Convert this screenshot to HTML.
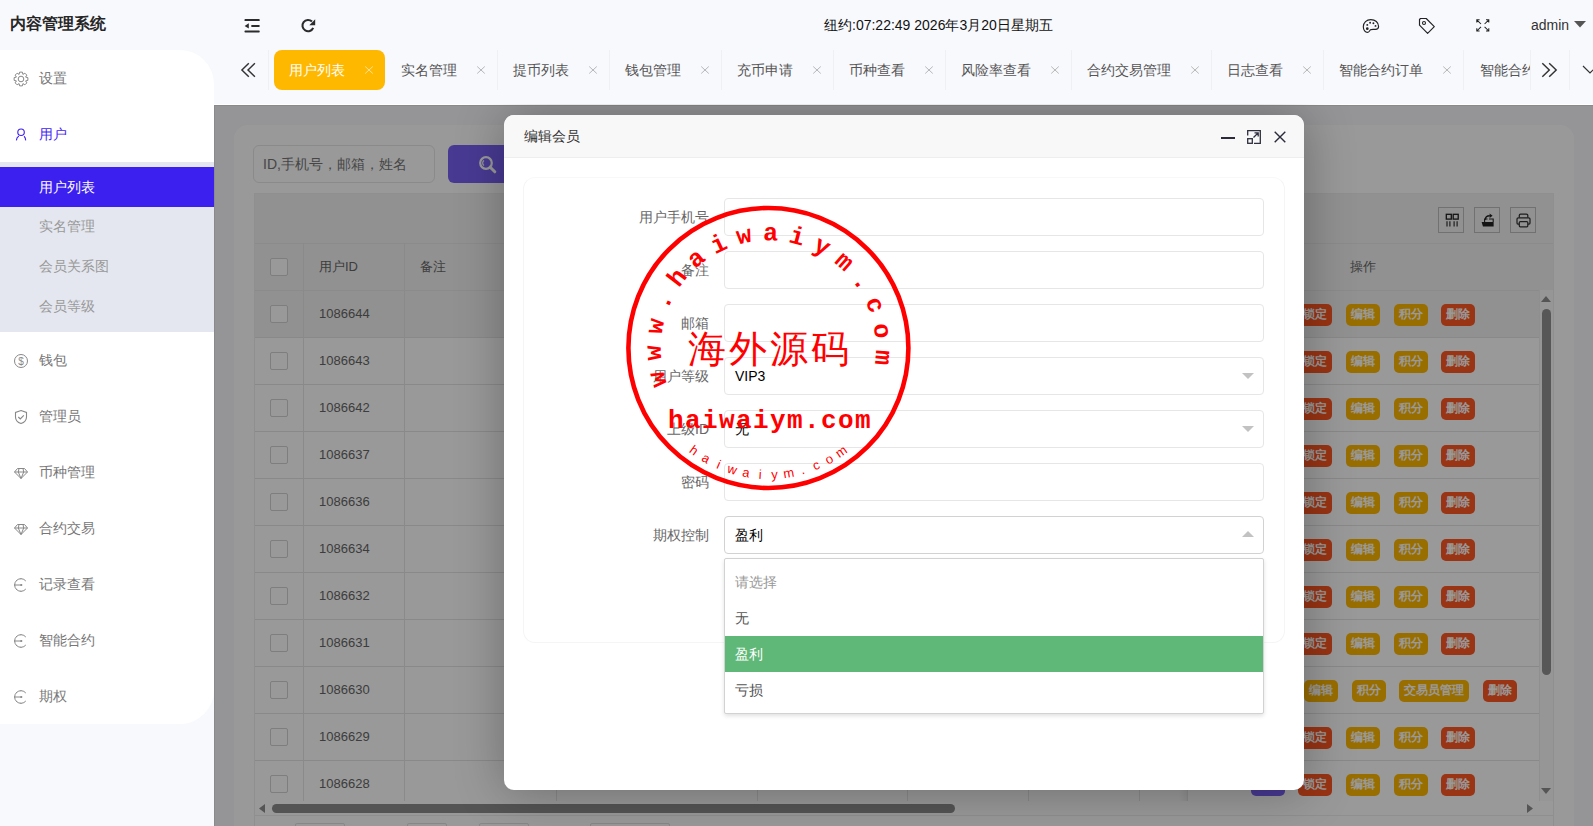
<!DOCTYPE html><html><head><meta charset="utf-8"><style>
*{box-sizing:border-box}
html,body{margin:0;padding:0}
body{width:1593px;height:826px;overflow:hidden;position:relative;background:#f8f9fd;font-family:"Liberation Sans",sans-serif;font-size:14px;color:#333}
.a{position:absolute}
.nw{white-space:nowrap}
svg{display:block}
#logo{left:10px;top:12.5px;font-size:15.6px;font-weight:bold;color:#262626;line-height:22px}
#date{left:824px;top:16px;line-height:18px;color:#111}
#admin{left:1531px;top:16px;line-height:18px;color:#333}
.tab{position:absolute;top:50px;height:40px;line-height:40px;color:#555;white-space:nowrap}
.tab .t{position:absolute;left:16px;top:0}
.tab.on .t{left:15px}
.tab .x{position:absolute;top:15px}
.tab.on{background:#ffb800;border-radius:8px;color:#fff}
.sep{position:absolute;top:50px;width:1px;height:40px;background:#eff0f4}
#side{left:0;top:50px;width:214px;height:674px;background:#fff;border-radius:0 34px 34px 0;overflow:hidden}
.mi{position:absolute;left:39px;line-height:20px;color:#777;white-space:nowrap}
.ic{position:absolute;left:13px}
#sub{left:0;top:112px;width:214px;height:170px;background:#e4e7ef}
#act{left:0;top:117px;width:214px;height:40px;background:#3c20f0}
#wrap{left:214px;top:104px;width:1379px;height:722px;overflow:hidden;background:#fff}
#content{left:0;top:1px;width:1379px;height:721px;background:#f8f9fd;border-top:1px solid #e8e9ee;border-left:1px solid #e8e9ee}
#shade{left:0;top:1px;width:1379px;height:721px;background:rgba(0,0,0,.4)}
#card{left:20px;top:20px;width:1339px;height:760px;background:#fff;border-radius:14px}
#search{left:39px;top:41px;width:182px;height:38px;border:1px solid #e6e6e6;border-radius:6px;color:#777;line-height:36px;padding-left:9px}
#sbtn{left:234px;top:41px;width:120px;height:38px;background:#7862f5;border-radius:6px}
#tbl{left:40px;top:89px;width:1300px;height:630px;border:1px solid #eee;background:#fff;overflow:hidden}
.row{position:absolute;left:0;width:1298px;height:47px;border-bottom:1px solid #eee}
.cell{position:absolute;top:0;height:46px;line-height:46px;color:#666;white-space:nowrap;font-size:13px}
.vl{position:absolute;width:1px;background:#e6e6e6}
.cb{position:absolute;width:18px;height:18px;border:1px solid #d2d2d2;border-radius:2px;background:#fff}
.btn{position:absolute;height:22px;line-height:21px;font-size:12px;font-weight:bold;color:#fff;border-radius:5px;text-align:center;white-space:nowrap}
.red{background:#ff5722}.yel{background:#ffb800}.pur{background:#7862f5}
#modal{left:290px;top:11px;width:800px;height:675px;background:#fff;border-radius:10px;box-shadow:1px 1px 50px rgba(0,0,0,.3);overflow:hidden}
#mtitle{left:0;top:0;width:800px;height:43px;background:#f8f8f8;border-bottom:1px solid #eee}
#mtt{left:20px;top:0;line-height:42px;color:#333}
#icard{left:19px;top:62px;width:762px;height:466px;border:1px solid #f5f5f5;border-top-color:#f8f8f8;border-radius:12px}
.lab{position:absolute;width:120px;text-align:right;color:#666;line-height:20px;white-space:nowrap}
.inp{position:absolute;left:220px;width:540px;height:38px;border:1px solid #e6e6e6;border-radius:4px;background:#fff;line-height:36px;padding-left:10px;color:#000}
#dd{left:220px;top:443px;width:540px;height:156px;border:1px solid #d2d2d2;background:#fff;box-shadow:0 2px 4px rgba(0,0,0,.12);border-radius:2px}
.ddi{position:absolute;left:0;width:538px;height:36px;line-height:36px;padding-left:10px;color:#555}
</style></head><body>
<div id="logo" class="a nw">内容管理系统</div>
<svg class="a" style="left:244px;top:18px" width="17" height="16" viewBox="0 0 17 16"><rect x="0.5" y="1.1" width="15.2" height="2" rx="0.7" fill="#2b2b2b"/><rect x="7.2" y="6.9" width="8.5" height="2" rx="0.7" fill="#2b2b2b"/><rect x="0.5" y="12.5" width="15.2" height="2" rx="0.7" fill="#2b2b2b"/><path d="M0.6 7.9 L4.8 5.3 L4.8 10.5 Z" fill="#2b2b2b"/></svg>
<svg class="a" style="left:300px;top:18px" width="17" height="16" viewBox="0 0 17 16"><path d="M13.2 9.8 A5.6 5.6 0 1 1 12 3.6" fill="none" stroke="#2b2b2b" stroke-width="2.1"/><path d="M15.2 1.3 L15.2 7.2 L9.3 7.2 Z" fill="#2b2b2b"/></svg>
<div id="date" class="a nw">纽约:07:22:49 2026年3月20日星期五</div>
<svg class="a" style="left:1362px;top:18px" width="18" height="16" viewBox="0 0 18 16"><path d="M8.8 1.6 C4.6 1.6 1.3 4.6 1.3 8.8 C1.3 12.2 3.4 14.4 5.4 14.4 C7.2 14.4 7.4 12.6 8.6 11.8 C9.8 11 11.4 11.4 13.4 11.4 C15.6 11.4 16.6 10.8 16.6 8.6 C16.6 4.4 13.2 1.6 8.8 1.6 Z" fill="none" stroke="#222" stroke-width="1.15"/><circle cx="5.3" cy="6.9" r="0.95" fill="#222"/><circle cx="8.1" cy="4.8" r="0.95" fill="#222"/><circle cx="11.4" cy="5.3" r="0.95" fill="#222"/><circle cx="13.5" cy="7.9" r="0.95" fill="#222"/><circle cx="5.3" cy="10.7" r="1.35" fill="#222"/></svg>
<svg class="a" style="left:1418px;top:17px" width="18" height="18" viewBox="0 0 18 18"><path d="M1.5 2.5 L1.5 8.2 L9.6 16.3 L16.3 9.6 L8.2 1.5 L2.5 1.5 Z" fill="none" stroke="#222" stroke-width="1.15" stroke-linejoin="round"/><circle cx="6" cy="6" r="1.5" fill="none" stroke="#222" stroke-width="1.1"/></svg>
<svg class="a" style="left:1476px;top:19px" width="14" height="14" viewBox="0 0 14 14" fill="none" stroke="#222" stroke-width="1.05"><path d="M0.8 3.6 V0.8 H3.6 M0.8 0.8 L5 5"/><path d="M10 0.8 H12.8 V3.6 M12.8 0.8 L8.6 5"/><path d="M0.8 9.2 V12 H3.6 M0.8 12 L5 7.8"/><path d="M12.8 9.2 V12 H10 M12.8 12 L8.6 7.8"/></svg>
<div id="admin" class="a nw">admin</div>
<svg class="a" style="left:1574px;top:21px" width="12" height="7" viewBox="0 0 12 7"><path d="M0 0 L12 0 L6 6.5 Z" fill="#555"/></svg>
<svg class="a" style="left:240px;top:62px" width="17" height="16" viewBox="0 0 17 16"><path d="M8.8 1.2 L1.9 7.9 L8.8 14.8 M14.9 1.2 L8 7.9 L14.9 14.8" fill="none" stroke="#333" stroke-width="1.45"/></svg>
<div class="sep" style="left:268px"></div>
<div class="tab on" style="left:274px;width:111px"><span class="t">用户列表</span><span class="x" style="left:90px"><svg width="10" height="10" viewBox="0 0 10 10"><path d="M1.2 1.5 L8.8 8.5 M8.8 1.5 L1.2 8.5" stroke="#fff" stroke-width="1" opacity="0.6"/></svg></span></div>
<div class="tab" style="left:385px;width:112px"><span class="t">实名管理</span><span class="x" style="left:91px"><svg width="10" height="10" viewBox="0 0 10 10"><path d="M1.2 1.5 L8.8 8.5 M8.8 1.5 L1.2 8.5" stroke="#b8b8b8" stroke-width="1" opacity="1"/></svg></span></div>
<div class="sep" style="left:497px"></div>
<div class="tab" style="left:497px;width:112px"><span class="t">提币列表</span><span class="x" style="left:91px"><svg width="10" height="10" viewBox="0 0 10 10"><path d="M1.2 1.5 L8.8 8.5 M8.8 1.5 L1.2 8.5" stroke="#b8b8b8" stroke-width="1" opacity="1"/></svg></span></div>
<div class="sep" style="left:609px"></div>
<div class="tab" style="left:609px;width:112px"><span class="t">钱包管理</span><span class="x" style="left:91px"><svg width="10" height="10" viewBox="0 0 10 10"><path d="M1.2 1.5 L8.8 8.5 M8.8 1.5 L1.2 8.5" stroke="#b8b8b8" stroke-width="1" opacity="1"/></svg></span></div>
<div class="sep" style="left:721px"></div>
<div class="tab" style="left:721px;width:112px"><span class="t">充币申请</span><span class="x" style="left:91px"><svg width="10" height="10" viewBox="0 0 10 10"><path d="M1.2 1.5 L8.8 8.5 M8.8 1.5 L1.2 8.5" stroke="#b8b8b8" stroke-width="1" opacity="1"/></svg></span></div>
<div class="sep" style="left:833px"></div>
<div class="tab" style="left:833px;width:112px"><span class="t">币种查看</span><span class="x" style="left:91px"><svg width="10" height="10" viewBox="0 0 10 10"><path d="M1.2 1.5 L8.8 8.5 M8.8 1.5 L1.2 8.5" stroke="#b8b8b8" stroke-width="1" opacity="1"/></svg></span></div>
<div class="sep" style="left:945px"></div>
<div class="tab" style="left:945px;width:126px"><span class="t">风险率查看</span><span class="x" style="left:105px"><svg width="10" height="10" viewBox="0 0 10 10"><path d="M1.2 1.5 L8.8 8.5 M8.8 1.5 L1.2 8.5" stroke="#b8b8b8" stroke-width="1" opacity="1"/></svg></span></div>
<div class="sep" style="left:1071px"></div>
<div class="tab" style="left:1071px;width:140px"><span class="t">合约交易管理</span><span class="x" style="left:119px"><svg width="10" height="10" viewBox="0 0 10 10"><path d="M1.2 1.5 L8.8 8.5 M8.8 1.5 L1.2 8.5" stroke="#b8b8b8" stroke-width="1" opacity="1"/></svg></span></div>
<div class="sep" style="left:1211px"></div>
<div class="tab" style="left:1211px;width:112px"><span class="t">日志查看</span><span class="x" style="left:91px"><svg width="10" height="10" viewBox="0 0 10 10"><path d="M1.2 1.5 L8.8 8.5 M8.8 1.5 L1.2 8.5" stroke="#b8b8b8" stroke-width="1" opacity="1"/></svg></span></div>
<div class="sep" style="left:1323px"></div>
<div class="tab" style="left:1323px;width:140px"><span class="t">智能合约订单</span><span class="x" style="left:119px"><svg width="10" height="10" viewBox="0 0 10 10"><path d="M1.2 1.5 L8.8 8.5 M8.8 1.5 L1.2 8.5" stroke="#b8b8b8" stroke-width="1" opacity="1"/></svg></span></div>
<div class="sep" style="left:1463px"></div>
<div class="tab" style="left:1464px;width:66px;overflow:hidden"><span class="t">智能合约订单</span></div>
<div class="a" style="left:1530px;top:50px;width:39px;height:40px;background:#f8f9fd;border-left:1px solid #eff0f4"></div>
<svg class="a" style="left:1541px;top:62px" width="17" height="16" viewBox="0 0 17 16"><path d="M1.3 1.2 L8.3 7.9 L1.3 14.8 M8.2 1.2 L15.2 7.9 L8.2 14.8" fill="none" stroke="#333" stroke-width="1.45"/></svg>
<div class="sep" style="left:1569px"></div>
<svg class="a" style="left:1582px;top:65px" width="16" height="10" viewBox="0 0 16 10"><path d="M1 1 L8 8 L15 1" fill="none" stroke="#333" stroke-width="1.2"/></svg>
<div id="side" class="a">
<div id="sub" class="a"></div><div id="act" class="a"></div>
<svg class="ic" style="top:21px" width="16" height="16" viewBox="0 0 16 16"><path d="M6.10 3.38 L6.61 1.14 L9.39 1.14 L9.90 3.38 L9.93 3.39 L11.87 2.17 L13.83 4.13 L12.61 6.07 L12.62 6.10 L14.86 6.61 L14.86 9.39 L12.62 9.90 L12.61 9.93 L13.83 11.87 L11.87 13.83 L9.93 12.61 L9.90 12.62 L9.39 14.86 L6.61 14.86 L6.10 12.62 L6.07 12.61 L4.13 13.83 L2.17 11.87 L3.39 9.93 L3.38 9.90 L1.14 9.39 L1.14 6.61 L3.38 6.10 L3.39 6.07 L2.17 4.13 L4.13 2.17 L6.07 3.39 Z" fill="none" stroke="#888" stroke-width="1" stroke-linejoin="round"/><circle cx="8" cy="8" r="2.8" fill="none" stroke="#888" stroke-width="1"/></svg>
<svg class="ic" style="top:77px" width="16" height="16" viewBox="0 0 16 16"><circle cx="8.05" cy="5.2" r="3.25" fill="none" stroke="#3f22f0" stroke-width="1.15"/><path d="M3.4 13.4 C3.5 11.4 4.4 9.9 5.9 9.1 M11.1 9.2 C12 10 12.6 11.4 12.7 13.4" fill="none" stroke="#3f22f0" stroke-width="1.15"/></svg>
<div class="mi" style="top:18px">设置</div>
<div class="mi" style="top:74px;color:#4326f2">用户</div>
<div class="mi" style="top:127px;color:#fff">用户列表</div>
<div class="mi" style="top:166px;color:#999">实名管理</div>
<div class="mi" style="top:206px;color:#999">会员关系图</div>
<div class="mi" style="top:246px;color:#999">会员等级</div>
<svg class="ic" style="top:303px" width="16" height="16" viewBox="0 0 16 16"><circle cx="8" cy="8" r="6.5" fill="none" stroke="#888" stroke-width="1"/><text x="8" y="11.6" font-size="10" text-anchor="middle" fill="#888" font-family="Liberation Sans">$</text></svg>
<div class="mi" style="top:300px">钱包</div>
<svg class="ic" style="top:359px" width="16" height="16" viewBox="0 0 16 16"><path d="M8 1.5 L13.5 3.5 L13.5 8 C13.5 11.3 11 13.6 8 14.6 C5 13.6 2.5 11.3 2.5 8 L2.5 3.5 Z" fill="none" stroke="#888" stroke-width="1.1"/><path d="M5.3 8 L7.3 10 L10.8 6.3" fill="none" stroke="#888" stroke-width="1.1"/></svg>
<div class="mi" style="top:356px">管理员</div>
<svg class="ic" style="top:415px" width="16" height="16" viewBox="0 0 16 16"><path d="M4.5 3.5 L11.5 3.5 L14.5 7 L8 13.5 L1.5 7 Z M1.5 7 L14.5 7 M6 3.5 L5.3 7 L8 13.5 L10.7 7 L10 3.5" fill="none" stroke="#888" stroke-width="1" stroke-linejoin="round"/></svg>
<div class="mi" style="top:412px">币种管理</div>
<svg class="ic" style="top:471px" width="16" height="16" viewBox="0 0 16 16"><path d="M4.5 3.5 L11.5 3.5 L14.5 7 L8 13.5 L1.5 7 Z M1.5 7 L14.5 7 M6 3.5 L5.3 7 L8 13.5 L10.7 7 L10 3.5" fill="none" stroke="#888" stroke-width="1" stroke-linejoin="round"/></svg>
<div class="mi" style="top:468px">合约交易</div>
<svg class="ic" style="top:527px" width="16" height="16" viewBox="0 0 16 16"><path d="M12.8 4 A6.3 6.3 0 1 0 12.8 12" fill="none" stroke="#888" stroke-width="1"/><path d="M8 1.2 V2.2 M8 13.8 V14.8 M1.2 8 H2.2 M3.3 3.3 L4 4 M3.3 12.7 L4 12" stroke="#888" stroke-width="1"/><circle cx="8.3" cy="8" r="1.1" fill="#888"/><path d="M1.7 8 H8" stroke="#888" stroke-width="1"/></svg>
<div class="mi" style="top:524px">记录查看</div>
<svg class="ic" style="top:583px" width="16" height="16" viewBox="0 0 16 16"><path d="M12.8 4 A6.3 6.3 0 1 0 12.8 12" fill="none" stroke="#888" stroke-width="1"/><path d="M8 1.2 V2.2 M8 13.8 V14.8 M1.2 8 H2.2 M3.3 3.3 L4 4 M3.3 12.7 L4 12" stroke="#888" stroke-width="1"/><circle cx="8.3" cy="8" r="1.1" fill="#888"/><path d="M1.7 8 H8" stroke="#888" stroke-width="1"/></svg>
<div class="mi" style="top:580px">智能合约</div>
<svg class="ic" style="top:639px" width="16" height="16" viewBox="0 0 16 16"><path d="M12.8 4 A6.3 6.3 0 1 0 12.8 12" fill="none" stroke="#888" stroke-width="1"/><path d="M8 1.2 V2.2 M8 13.8 V14.8 M1.2 8 H2.2 M3.3 3.3 L4 4 M3.3 12.7 L4 12" stroke="#888" stroke-width="1"/><circle cx="8.3" cy="8" r="1.1" fill="#888"/><path d="M1.7 8 H8" stroke="#888" stroke-width="1"/></svg>
<div class="mi" style="top:636px">期权</div>
</div>
<div id="wrap" class="a">
<div class="a" style="left:0;top:1px;width:1379px;height:721px;background:#f8f9fd"></div>
<div class="a" style="left:0;top:1px;width:1379px;height:1px;background:#e6e7ec"></div>
<div class="a" style="left:0;top:1px;width:1px;height:721px;background:#e6e7ec"></div>
<div class="a" style="left:20px;top:21px;width:1340px;height:760px;background:#fff;border-radius:14px"></div>
<div class="a nw" style="left:39px;top:41px;width:182px;height:38px;border:1px solid #e6e6e6;border-radius:6px;color:#757575;line-height:36px;padding-left:9px">ID,手机号，邮箱，姓名</div>
<div class="a" style="left:234px;top:41px;width:110px;height:38px;background:#7862f5;border-radius:6px"></div>
<svg class="a" style="left:264px;top:51px" width="20" height="20" viewBox="0 0 20 20"><circle cx="8" cy="8" r="5.8" fill="none" stroke="#fff" stroke-width="2.2"/><path d="M12.2 12.2 L16.8 16.8" stroke="#fff" stroke-width="3" stroke-linecap="round"/><path d="M6 5.5 A3 3 0 0 0 6 10.5" fill="none" stroke="#fff" stroke-width="1.2"/></svg>
<div class="a" style="left:40px;top:89px;width:1300px;height:640px;border:1px solid #eee;background:#fff"></div>
<div class="a" style="left:41px;top:90px;width:1298px;height:50px;background:#f2f2f2;border-bottom:1px solid #e8e8e8"></div>
<div class="a" style="left:1224px;top:103px;width:26px;height:26px;border:1px solid #bdbdbd"></div>
<div class="a" style="left:1260px;top:103px;width:26px;height:26px;border:1px solid #bdbdbd"></div>
<div class="a" style="left:1296px;top:103px;width:26px;height:26px;border:1px solid #bdbdbd"></div>
<svg class="a" style="left:1224px;top:103px" width="26" height="26" viewBox="0 0 26 26" fill="none" stroke="#222" stroke-width="1.3"><rect x="8.3" y="7.3" width="5" height="4.8"/><rect x="15.2" y="7.3" width="5" height="4.8"/><path d="M9 14.3 V19.5 M11.9 14.3 V19.5 M16.1 14.3 V19.5 M19.1 14.3 V19.5" stroke-width="1.1"/></svg>
<svg class="a" style="left:1260px;top:103px" width="26" height="26" viewBox="0 0 26 26"><path d="M7.6 15 H19.6 V19.6 H9 Z" fill="#222"/><path d="M10.6 15 V12 H13.5 M15 12 H19.2 V15" fill="none" stroke="#222" stroke-width="1.1"/><path d="M11.3 12.8 C11.3 10.3 12.8 8.8 15.8 8.8" fill="none" stroke="#222" stroke-width="1.4"/><path d="M15.6 6.5 L18.6 8.8 L15.6 11.1 Z" fill="#222"/></svg>
<svg class="a" style="left:1296px;top:103px" width="26" height="26" viewBox="0 0 26 26" fill="none" stroke="#333" stroke-width="1.25"><path d="M9.3 10.6 V8.2 C9.3 7.5 9.8 7.2 10.5 7.2 H16.5 C17.2 7.2 17.8 7.5 17.8 8.2 V10.6"/><path d="M9 17 H8 C7.3 17 7 16.6 7 16 V12 C7 11.2 7.5 10.8 8.3 10.8 H18.7 C19.5 10.8 20 11.2 20 12 V16 C20 16.6 19.7 17 19 17 H18"/><rect x="9.3" y="14.6" width="8.5" height="5.2" rx="1"/></svg>
<div class="a" style="left:41px;top:140px;width:1298px;height:47px;background:#f2f2f2;border-bottom:1px solid #e8e8e8"></div>
<div class="vl" style="left:89px;top:139px;height:558px"></div>
<div class="vl" style="left:190px;top:139px;height:558px"></div>
<div class="vl" style="left:342px;top:139px;height:558px"></div>
<div class="vl" style="left:543px;top:139px;height:558px"></div>
<div class="vl" style="left:693px;top:139px;height:558px"></div>
<div class="vl" style="left:814px;top:139px;height:558px"></div>
<div class="vl" style="left:925px;top:139px;height:558px"></div>
<div class="vl" style="left:973px;top:139px;height:558px"></div>
<div class="cell" style="left:105px;top:140px;color:#666">用户ID</div>
<div class="cell" style="left:206px;top:140px;color:#666">备注</div>
<div class="cb" style="left:56px;top:154px"></div>
<div class="a" style="left:41px;top:187px;width:1284px;height:47px;background:#f2f2f2;border-bottom:1px solid #e4e4e4"></div>
<div class="vl" style="left:89px;top:187px;height:47px"></div>
<div class="vl" style="left:190px;top:187px;height:47px"></div>
<div class="vl" style="left:342px;top:187px;height:47px"></div>
<div class="vl" style="left:543px;top:187px;height:47px"></div>
<div class="vl" style="left:693px;top:187px;height:47px"></div>
<div class="vl" style="left:814px;top:187px;height:47px"></div>
<div class="vl" style="left:925px;top:187px;height:47px"></div>
<div class="vl" style="left:973px;top:187px;height:47px"></div>
<div class="cb" style="left:56px;top:201px"></div>
<div class="cell" style="left:105px;top:187px">1086644</div>
<div class="btn pur" style="left:1037px;top:200px;width:34px">查看</div>
<div class="btn red" style="left:1084px;top:200px;width:34px">锁定</div>
<div class="btn yel" style="left:1132px;top:200px;width:34px">编辑</div>
<div class="btn yel" style="left:1180px;top:200px;width:34px">积分</div>
<div class="btn red" style="left:1227px;top:200px;width:34px">删除</div>
<div class="a" style="left:41px;top:234px;width:1284px;height:47px;background:#fff;border-bottom:1px solid #e4e4e4"></div>
<div class="vl" style="left:89px;top:234px;height:47px"></div>
<div class="vl" style="left:190px;top:234px;height:47px"></div>
<div class="vl" style="left:342px;top:234px;height:47px"></div>
<div class="vl" style="left:543px;top:234px;height:47px"></div>
<div class="vl" style="left:693px;top:234px;height:47px"></div>
<div class="vl" style="left:814px;top:234px;height:47px"></div>
<div class="vl" style="left:925px;top:234px;height:47px"></div>
<div class="vl" style="left:973px;top:234px;height:47px"></div>
<div class="cb" style="left:56px;top:248px"></div>
<div class="cell" style="left:105px;top:234px">1086643</div>
<div class="btn pur" style="left:1037px;top:247px;width:34px">查看</div>
<div class="btn red" style="left:1084px;top:247px;width:34px">锁定</div>
<div class="btn yel" style="left:1132px;top:247px;width:34px">编辑</div>
<div class="btn yel" style="left:1180px;top:247px;width:34px">积分</div>
<div class="btn red" style="left:1227px;top:247px;width:34px">删除</div>
<div class="a" style="left:41px;top:281px;width:1284px;height:47px;background:#fff;border-bottom:1px solid #e4e4e4"></div>
<div class="vl" style="left:89px;top:281px;height:47px"></div>
<div class="vl" style="left:190px;top:281px;height:47px"></div>
<div class="vl" style="left:342px;top:281px;height:47px"></div>
<div class="vl" style="left:543px;top:281px;height:47px"></div>
<div class="vl" style="left:693px;top:281px;height:47px"></div>
<div class="vl" style="left:814px;top:281px;height:47px"></div>
<div class="vl" style="left:925px;top:281px;height:47px"></div>
<div class="vl" style="left:973px;top:281px;height:47px"></div>
<div class="cb" style="left:56px;top:295px"></div>
<div class="cell" style="left:105px;top:281px">1086642</div>
<div class="btn pur" style="left:1037px;top:294px;width:34px">查看</div>
<div class="btn red" style="left:1084px;top:294px;width:34px">锁定</div>
<div class="btn yel" style="left:1132px;top:294px;width:34px">编辑</div>
<div class="btn yel" style="left:1180px;top:294px;width:34px">积分</div>
<div class="btn red" style="left:1227px;top:294px;width:34px">删除</div>
<div class="a" style="left:41px;top:328px;width:1284px;height:47px;background:#fff;border-bottom:1px solid #e4e4e4"></div>
<div class="vl" style="left:89px;top:328px;height:47px"></div>
<div class="vl" style="left:190px;top:328px;height:47px"></div>
<div class="vl" style="left:342px;top:328px;height:47px"></div>
<div class="vl" style="left:543px;top:328px;height:47px"></div>
<div class="vl" style="left:693px;top:328px;height:47px"></div>
<div class="vl" style="left:814px;top:328px;height:47px"></div>
<div class="vl" style="left:925px;top:328px;height:47px"></div>
<div class="vl" style="left:973px;top:328px;height:47px"></div>
<div class="cb" style="left:56px;top:342px"></div>
<div class="cell" style="left:105px;top:328px">1086637</div>
<div class="btn pur" style="left:1037px;top:341px;width:34px">查看</div>
<div class="btn red" style="left:1084px;top:341px;width:34px">锁定</div>
<div class="btn yel" style="left:1132px;top:341px;width:34px">编辑</div>
<div class="btn yel" style="left:1180px;top:341px;width:34px">积分</div>
<div class="btn red" style="left:1227px;top:341px;width:34px">删除</div>
<div class="a" style="left:41px;top:375px;width:1284px;height:47px;background:#fff;border-bottom:1px solid #e4e4e4"></div>
<div class="vl" style="left:89px;top:375px;height:47px"></div>
<div class="vl" style="left:190px;top:375px;height:47px"></div>
<div class="vl" style="left:342px;top:375px;height:47px"></div>
<div class="vl" style="left:543px;top:375px;height:47px"></div>
<div class="vl" style="left:693px;top:375px;height:47px"></div>
<div class="vl" style="left:814px;top:375px;height:47px"></div>
<div class="vl" style="left:925px;top:375px;height:47px"></div>
<div class="vl" style="left:973px;top:375px;height:47px"></div>
<div class="cb" style="left:56px;top:389px"></div>
<div class="cell" style="left:105px;top:375px">1086636</div>
<div class="btn pur" style="left:1037px;top:388px;width:34px">查看</div>
<div class="btn red" style="left:1084px;top:388px;width:34px">锁定</div>
<div class="btn yel" style="left:1132px;top:388px;width:34px">编辑</div>
<div class="btn yel" style="left:1180px;top:388px;width:34px">积分</div>
<div class="btn red" style="left:1227px;top:388px;width:34px">删除</div>
<div class="a" style="left:41px;top:422px;width:1284px;height:47px;background:#fff;border-bottom:1px solid #e4e4e4"></div>
<div class="vl" style="left:89px;top:422px;height:47px"></div>
<div class="vl" style="left:190px;top:422px;height:47px"></div>
<div class="vl" style="left:342px;top:422px;height:47px"></div>
<div class="vl" style="left:543px;top:422px;height:47px"></div>
<div class="vl" style="left:693px;top:422px;height:47px"></div>
<div class="vl" style="left:814px;top:422px;height:47px"></div>
<div class="vl" style="left:925px;top:422px;height:47px"></div>
<div class="vl" style="left:973px;top:422px;height:47px"></div>
<div class="cb" style="left:56px;top:436px"></div>
<div class="cell" style="left:105px;top:422px">1086634</div>
<div class="btn pur" style="left:1037px;top:435px;width:34px">查看</div>
<div class="btn red" style="left:1084px;top:435px;width:34px">锁定</div>
<div class="btn yel" style="left:1132px;top:435px;width:34px">编辑</div>
<div class="btn yel" style="left:1180px;top:435px;width:34px">积分</div>
<div class="btn red" style="left:1227px;top:435px;width:34px">删除</div>
<div class="a" style="left:41px;top:469px;width:1284px;height:47px;background:#fff;border-bottom:1px solid #e4e4e4"></div>
<div class="vl" style="left:89px;top:469px;height:47px"></div>
<div class="vl" style="left:190px;top:469px;height:47px"></div>
<div class="vl" style="left:342px;top:469px;height:47px"></div>
<div class="vl" style="left:543px;top:469px;height:47px"></div>
<div class="vl" style="left:693px;top:469px;height:47px"></div>
<div class="vl" style="left:814px;top:469px;height:47px"></div>
<div class="vl" style="left:925px;top:469px;height:47px"></div>
<div class="vl" style="left:973px;top:469px;height:47px"></div>
<div class="cb" style="left:56px;top:483px"></div>
<div class="cell" style="left:105px;top:469px">1086632</div>
<div class="btn pur" style="left:1037px;top:482px;width:34px">查看</div>
<div class="btn red" style="left:1084px;top:482px;width:34px">锁定</div>
<div class="btn yel" style="left:1132px;top:482px;width:34px">编辑</div>
<div class="btn yel" style="left:1180px;top:482px;width:34px">积分</div>
<div class="btn red" style="left:1227px;top:482px;width:34px">删除</div>
<div class="a" style="left:41px;top:516px;width:1284px;height:47px;background:#fff;border-bottom:1px solid #e4e4e4"></div>
<div class="vl" style="left:89px;top:516px;height:47px"></div>
<div class="vl" style="left:190px;top:516px;height:47px"></div>
<div class="vl" style="left:342px;top:516px;height:47px"></div>
<div class="vl" style="left:543px;top:516px;height:47px"></div>
<div class="vl" style="left:693px;top:516px;height:47px"></div>
<div class="vl" style="left:814px;top:516px;height:47px"></div>
<div class="vl" style="left:925px;top:516px;height:47px"></div>
<div class="vl" style="left:973px;top:516px;height:47px"></div>
<div class="cb" style="left:56px;top:530px"></div>
<div class="cell" style="left:105px;top:516px">1086631</div>
<div class="btn pur" style="left:1037px;top:529px;width:34px">查看</div>
<div class="btn red" style="left:1084px;top:529px;width:34px">锁定</div>
<div class="btn yel" style="left:1132px;top:529px;width:34px">编辑</div>
<div class="btn yel" style="left:1180px;top:529px;width:34px">积分</div>
<div class="btn red" style="left:1227px;top:529px;width:34px">删除</div>
<div class="a" style="left:41px;top:563px;width:1284px;height:47px;background:#fff;border-bottom:1px solid #e4e4e4"></div>
<div class="vl" style="left:89px;top:563px;height:47px"></div>
<div class="vl" style="left:190px;top:563px;height:47px"></div>
<div class="vl" style="left:342px;top:563px;height:47px"></div>
<div class="vl" style="left:543px;top:563px;height:47px"></div>
<div class="vl" style="left:693px;top:563px;height:47px"></div>
<div class="vl" style="left:814px;top:563px;height:47px"></div>
<div class="vl" style="left:925px;top:563px;height:47px"></div>
<div class="vl" style="left:973px;top:563px;height:47px"></div>
<div class="cb" style="left:56px;top:577px"></div>
<div class="cell" style="left:105px;top:563px">1086630</div>
<div class="btn pur" style="left:994px;top:576px;width:34px">查看</div>
<div class="btn red" style="left:1042px;top:576px;width:34px">锁定</div>
<div class="btn yel" style="left:1090px;top:576px;width:34px">编辑</div>
<div class="btn yel" style="left:1138px;top:576px;width:34px">积分</div>
<div class="btn yel" style="left:1185px;top:576px;width:70px">交易员管理</div>
<div class="btn red" style="left:1269px;top:576px;width:34px">删除</div>
<div class="a" style="left:41px;top:610px;width:1284px;height:47px;background:#fff;border-bottom:1px solid #e4e4e4"></div>
<div class="vl" style="left:89px;top:610px;height:47px"></div>
<div class="vl" style="left:190px;top:610px;height:47px"></div>
<div class="vl" style="left:342px;top:610px;height:47px"></div>
<div class="vl" style="left:543px;top:610px;height:47px"></div>
<div class="vl" style="left:693px;top:610px;height:47px"></div>
<div class="vl" style="left:814px;top:610px;height:47px"></div>
<div class="vl" style="left:925px;top:610px;height:47px"></div>
<div class="vl" style="left:973px;top:610px;height:47px"></div>
<div class="cb" style="left:56px;top:624px"></div>
<div class="cell" style="left:105px;top:610px">1086629</div>
<div class="btn pur" style="left:1037px;top:623px;width:34px">查看</div>
<div class="btn red" style="left:1084px;top:623px;width:34px">锁定</div>
<div class="btn yel" style="left:1132px;top:623px;width:34px">编辑</div>
<div class="btn yel" style="left:1180px;top:623px;width:34px">积分</div>
<div class="btn red" style="left:1227px;top:623px;width:34px">删除</div>
<div class="a" style="left:41px;top:657px;width:1284px;height:40px;background:#fff;"></div>
<div class="vl" style="left:89px;top:657px;height:40px"></div>
<div class="vl" style="left:190px;top:657px;height:40px"></div>
<div class="vl" style="left:342px;top:657px;height:40px"></div>
<div class="vl" style="left:543px;top:657px;height:40px"></div>
<div class="vl" style="left:693px;top:657px;height:40px"></div>
<div class="vl" style="left:814px;top:657px;height:40px"></div>
<div class="vl" style="left:925px;top:657px;height:40px"></div>
<div class="vl" style="left:973px;top:657px;height:40px"></div>
<div class="cb" style="left:56px;top:671px"></div>
<div class="cell" style="left:105px;top:657px">1086628</div>
<div class="btn pur" style="left:1037px;top:670px;width:34px">查看</div>
<div class="btn red" style="left:1084px;top:670px;width:34px">锁定</div>
<div class="btn yel" style="left:1132px;top:670px;width:34px">编辑</div>
<div class="btn yel" style="left:1180px;top:670px;width:34px">积分</div>
<div class="btn red" style="left:1227px;top:670px;width:34px">删除</div>
<div class="cell" style="left:973px;top:140px;width:352px;text-align:center;color:#666">操作</div>
<div class="a" style="left:965px;top:186px;width:8px;height:511px;background:linear-gradient(to left,rgba(0,0,0,.06),rgba(0,0,0,0))"></div>
<div class="a" style="left:1325px;top:186px;width:14px;height:511px;background:#fbfbfb;border-left:1px solid #eee"></div>
<svg class="a" style="left:1327px;top:192px" width="10" height="6" viewBox="0 0 10 6"><path d="M0 6 L5 0 L10 6 Z" fill="#8e8e8e"/></svg>
<svg class="a" style="left:1327px;top:684px" width="10" height="6" viewBox="0 0 10 6"><path d="M0 0 L5 6 L10 0 Z" fill="#8e8e8e"/></svg>
<div class="a" style="left:1328px;top:205px;width:9px;height:366px;background:#929292;border-radius:5px"></div>
<div class="a" style="left:41px;top:697px;width:1284px;height:14px;background:#fff"></div>
<svg class="a" style="left:45px;top:700px" width="6" height="9" viewBox="0 0 6 9"><path d="M6 0 L0 4.5 L6 9 Z" fill="#8e8e8e"/></svg>
<svg class="a" style="left:1313px;top:700px" width="6" height="9" viewBox="0 0 6 9"><path d="M0 0 L6 4.5 L0 9 Z" fill="#8e8e8e"/></svg>
<div class="a" style="left:58px;top:700px;width:683px;height:9px;background:#8c8c8c;border-radius:5px"></div>
<div class="a" style="left:41px;top:711px;width:1298px;height:1px;background:#eee"></div>
<div class="a" style="left:81px;top:719px;width:50px;height:20px;border:1px solid #e2e2e2;border-radius:2px;background:#fff"></div>
<div class="a" style="left:193px;top:719px;width:40px;height:20px;border:1px solid #e2e2e2;border-radius:2px;background:#fff"></div>
<div class="a" style="left:265px;top:719px;width:50px;height:20px;border:1px solid #e2e2e2;border-radius:2px;background:#fff"></div>
<div class="a" style="left:376px;top:719px;width:80px;height:20px;border:1px solid #e2e2e2;border-radius:2px;background:#fff"></div>
<div id="shade" class="a"></div>
<div id="modal" class="a" style="left:290px;top:11px">
<div id="mtitle" class="a"></div><div id="mtt" class="a nw">编辑会员</div>
<div class="a" style="left:717px;top:22px;width:14px;height:2px;background:#2b2b3b"></div>
<svg class="a" style="left:743px;top:15px" width="14" height="14" viewBox="0 0 14 14" fill="none" stroke="#2e2e3e" stroke-width="1.3"><path d="M0.7 5.5 V0.7 H13.3 V13.3 H7"/><rect x="0.7" y="8.7" width="4.6" height="4.6"/><path d="M6.5 7.5 L11 3 M7.5 2.8 H11.2 V6.5"/></svg>
<svg class="a" style="left:770px;top:16px" width="12" height="12" viewBox="0 0 12 12"><path d="M0.7 0.7 L11.3 11.3 M11.3 0.7 L0.7 11.3" stroke="#2b2b3b" stroke-width="1.4"/></svg>
<div id="icard" class="a"></div>
<div class="lab" style="left:85px;top:92px">用户手机号</div>
<div class="inp" style="top:83px;border-color:#e6e6e6"></div>
<div class="lab" style="left:85px;top:145px">备注</div>
<div class="inp" style="top:136px;border-color:#e6e6e6"></div>
<div class="lab" style="left:85px;top:198px">邮箱</div>
<div class="inp" style="top:189px;border-color:#e6e6e6"></div>
<div class="lab" style="left:85px;top:251px">用户等级</div>
<div class="inp" style="top:242px;border-color:#e6e6e6">VIP3</div>
<svg class="a" style="left:738px;top:258px" width="12" height="6" viewBox="0 0 12 6"><path d="M0 0 L12 0 L6 6 Z" fill="#c2c2c2"/></svg>
<div class="lab" style="left:85px;top:304px">上级ID</div>
<div class="inp" style="top:295px;border-color:#e6e6e6">无</div>
<svg class="a" style="left:738px;top:311px" width="12" height="6" viewBox="0 0 12 6"><path d="M0 0 L12 0 L6 6 Z" fill="#c2c2c2"/></svg>
<div class="lab" style="left:85px;top:357px">密码</div>
<div class="inp" style="top:348px;border-color:#e6e6e6"></div>
<div class="lab" style="left:85px;top:410px">期权控制</div>
<div class="inp" style="top:401px;border-color:#d2d2d2">盈利</div>
<svg class="a" style="left:738px;top:416px" width="12" height="6" viewBox="0 0 12 6"><path d="M0 6 L12 6 L6 0 Z" fill="#c2c2c2"/></svg>
<div id="dd" class="a">
<div class="ddi" style="top:5px;color:#999">请选择</div>
<div class="ddi" style="top:41px">无</div>
<div class="ddi" style="top:77px;background:#5fb878;color:#fff">盈利</div>
<div class="ddi" style="top:113px">亏损</div>
</div>
</div>
</div>
<svg class="a" style="left:0;top:0" width="1593" height="826" viewBox="0 0 1593 826"><circle cx="768.4" cy="348" r="140" fill="none" stroke="#ff0000" stroke-width="4.6"/><text x="768.4" y="240.5" transform="rotate(254.20 768.4 348)" text-anchor="middle" font-family="Liberation Mono" font-weight="bold" font-size="25" fill="#ff0000">w</text><text x="768.4" y="240.5" transform="rotate(267.57 768.4 348)" text-anchor="middle" font-family="Liberation Mono" font-weight="bold" font-size="25" fill="#ff0000">w</text><text x="768.4" y="240.5" transform="rotate(280.94 768.4 348)" text-anchor="middle" font-family="Liberation Mono" font-weight="bold" font-size="25" fill="#ff0000">w</text><text x="768.4" y="240.5" transform="rotate(294.31 768.4 348)" text-anchor="middle" font-family="Liberation Mono" font-weight="bold" font-size="25" fill="#ff0000">.</text><text x="768.4" y="240.5" transform="rotate(307.68 768.4 348)" text-anchor="middle" font-family="Liberation Mono" font-weight="bold" font-size="25" fill="#ff0000">h</text><text x="768.4" y="240.5" transform="rotate(321.05 768.4 348)" text-anchor="middle" font-family="Liberation Mono" font-weight="bold" font-size="25" fill="#ff0000">a</text><text x="768.4" y="240.5" transform="rotate(334.42 768.4 348)" text-anchor="middle" font-family="Liberation Mono" font-weight="bold" font-size="25" fill="#ff0000">i</text><text x="768.4" y="240.5" transform="rotate(347.79 768.4 348)" text-anchor="middle" font-family="Liberation Mono" font-weight="bold" font-size="25" fill="#ff0000">w</text><text x="768.4" y="240.5" transform="rotate(361.16 768.4 348)" text-anchor="middle" font-family="Liberation Mono" font-weight="bold" font-size="25" fill="#ff0000">a</text><text x="768.4" y="240.5" transform="rotate(374.53 768.4 348)" text-anchor="middle" font-family="Liberation Mono" font-weight="bold" font-size="25" fill="#ff0000">i</text><text x="768.4" y="240.5" transform="rotate(387.90 768.4 348)" text-anchor="middle" font-family="Liberation Mono" font-weight="bold" font-size="25" fill="#ff0000">y</text><text x="768.4" y="240.5" transform="rotate(401.27 768.4 348)" text-anchor="middle" font-family="Liberation Mono" font-weight="bold" font-size="25" fill="#ff0000">m</text><text x="768.4" y="240.5" transform="rotate(414.64 768.4 348)" text-anchor="middle" font-family="Liberation Mono" font-weight="bold" font-size="25" fill="#ff0000">.</text><text x="768.4" y="240.5" transform="rotate(428.01 768.4 348)" text-anchor="middle" font-family="Liberation Mono" font-weight="bold" font-size="25" fill="#ff0000">c</text><text x="768.4" y="240.5" transform="rotate(441.38 768.4 348)" text-anchor="middle" font-family="Liberation Mono" font-weight="bold" font-size="25" fill="#ff0000">o</text><text x="768.4" y="240.5" transform="rotate(454.75 768.4 348)" text-anchor="middle" font-family="Liberation Mono" font-weight="bold" font-size="25" fill="#ff0000">m</text><text x="768.4" y="479" transform="rotate(36.00 768.4 348)" text-anchor="middle" font-family="Liberation Sans" font-size="13" fill="#ff0000">h</text><text x="768.4" y="479" transform="rotate(29.54 768.4 348)" text-anchor="middle" font-family="Liberation Sans" font-size="13" fill="#ff0000">a</text><text x="768.4" y="479" transform="rotate(23.08 768.4 348)" text-anchor="middle" font-family="Liberation Sans" font-size="13" fill="#ff0000">i</text><text x="768.4" y="479" transform="rotate(16.62 768.4 348)" text-anchor="middle" font-family="Liberation Sans" font-size="13" fill="#ff0000">w</text><text x="768.4" y="479" transform="rotate(10.16 768.4 348)" text-anchor="middle" font-family="Liberation Sans" font-size="13" fill="#ff0000">a</text><text x="768.4" y="479" transform="rotate(3.70 768.4 348)" text-anchor="middle" font-family="Liberation Sans" font-size="13" fill="#ff0000">i</text><text x="768.4" y="479" transform="rotate(-2.76 768.4 348)" text-anchor="middle" font-family="Liberation Sans" font-size="13" fill="#ff0000">y</text><text x="768.4" y="479" transform="rotate(-9.22 768.4 348)" text-anchor="middle" font-family="Liberation Sans" font-size="13" fill="#ff0000">m</text><text x="768.4" y="479" transform="rotate(-15.68 768.4 348)" text-anchor="middle" font-family="Liberation Sans" font-size="13" fill="#ff0000">.</text><text x="768.4" y="479" transform="rotate(-22.14 768.4 348)" text-anchor="middle" font-family="Liberation Sans" font-size="13" fill="#ff0000">c</text><text x="768.4" y="479" transform="rotate(-28.60 768.4 348)" text-anchor="middle" font-family="Liberation Sans" font-size="13" fill="#ff0000">o</text><text x="768.4" y="479" transform="rotate(-35.06 768.4 348)" text-anchor="middle" font-family="Liberation Sans" font-size="13" fill="#ff0000">m</text><text x="770" y="362" text-anchor="middle" font-family="Liberation Serif" font-size="38" letter-spacing="3" fill="#ff0000">海外源码</text><text x="770" y="428.4" text-anchor="middle" font-family="Liberation Mono" font-weight="bold" font-size="26" letter-spacing="1.4" fill="#ff0000">haiwaiym.com</text></svg>
</body></html>
